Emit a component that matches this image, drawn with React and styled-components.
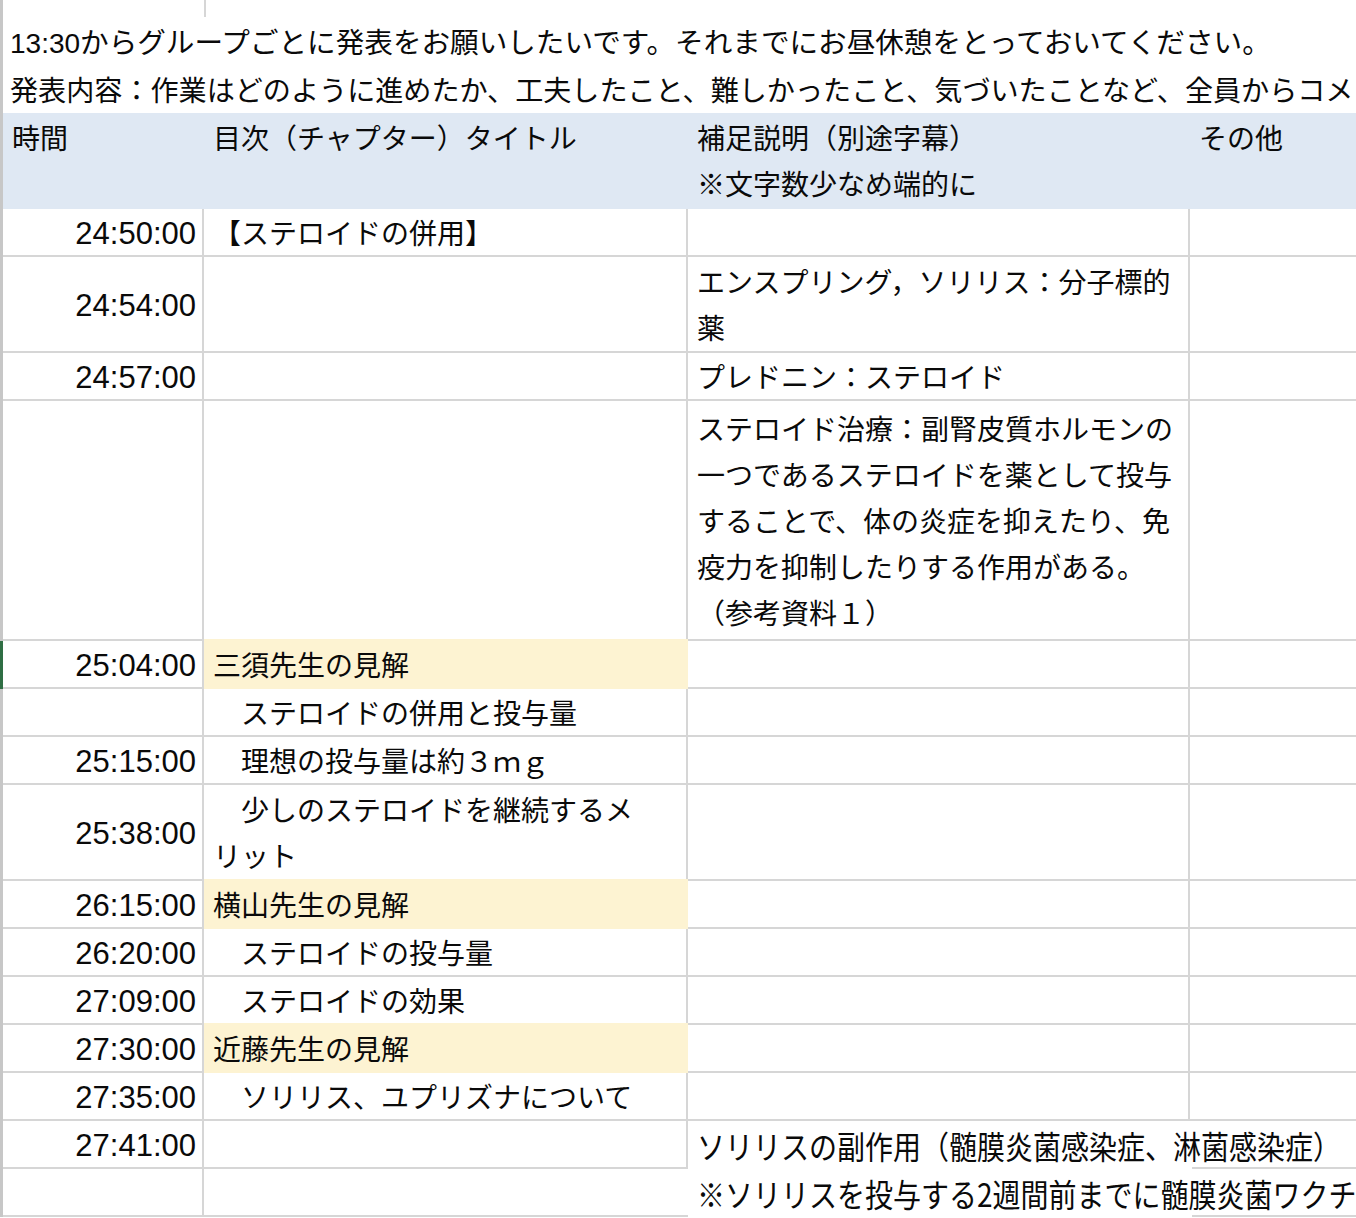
import React from "react";
import styled, { createGlobalStyle, css } from "styled-components";

const Global = createGlobalStyle`
  html, body { margin: 0; padding: 0; background: #fff; }
  body {
    width: 1356px;
    height: 1218px;
    overflow: hidden;
    font-family: "Noto Sans CJK JP", "Noto Sans", sans-serif;
    color: #0a0a0a;
  }
`;

const GRID = "#d6d6d6";
const EDGE = "#c7c7c7";

const Sheet = styled.div`
  width: 1356px;
  display: flex;
  flex-direction: column;
  font-size: 28px;
  line-break: strict;
`;

const Row = styled.div`
  display: grid;
  grid-template-columns: 201px 484px 502px 169px;
  height: ${(p) => p.$h}px;
  border-left: 3px solid ${(p) => (p.$active ? "#2f6e44" : EDGE)};
  box-sizing: border-box;
  background: ${(p) => p.$bg || "transparent"};
`;

const WideRow = styled.div`
  height: 48px;
  border-left: 3px solid ${EDGE};
  padding-left: 7px;
  font-size: ${(p) => p.$size || 28}px;
  line-height: 48px;
  white-space: nowrap;
  overflow: hidden;
`;

const Digits = styled.span`
  font-family: "Liberation Sans Narrow", "Liberation Sans", sans-serif;
  font-size: 28px;
`;

const TopStub = styled.div`
  height: 17px;
  width: 203px;
  border-right: 2px solid ${GRID};
  box-sizing: border-box;
`;

const HeadCell = styled.div`
  padding: 1px 9px 0 9px;
  line-height: 46px;
  white-space: pre-wrap;
`;

const Cell = styled.div`
  box-sizing: border-box;
  border-right: ${(p) => (p.$noRight ? "none" : `2px solid ${GRID}`)};
  border-bottom: ${(p) => (p.$noBottom ? "none" : `2px solid ${GRID}`)};
  padding: 0 8px 0 9px;
  line-height: 46px;
  display: flex;
  align-items: center;
  white-space: pre-wrap;
  overflow: hidden;
  ${(p) =>
    p.$hl &&
    css`
      background: #fdf3d2;
      border-color: #fdf3d2;
      box-shadow: 0 -2px 0 #fdf3d2;
    `}
`;

const TimeCell = styled(Cell)`
  justify-content: flex-end;
  padding: 3px 6px 0 4px;
  font-family: "Liberation Sans", "Noto Sans CJK JP", sans-serif;
  font-size: 31px;
`;

const Block = styled.div`
  width: 100%;
`;

const SpillCell = styled.div`
  grid-column: 3 / span 2;
  box-sizing: border-box;
  padding-left: 9px;
  height: 48px;
  overflow: hidden;
  white-space: nowrap;
  display: flex;
  align-items: center;
  background: linear-gradient(${GRID}, ${GRID}) no-repeat right bottom / 167px 2px;
`;

const Condensed = styled.span`
  display: inline-block;
  font-size: 32px;
  line-height: 46px;
  transform: scaleX(0.875);
  transform-origin: left center;
`;

const rows = [
  { t: "24:50:00", b: "【ステロイドの併用】", h: 48 },
  { t: "24:54:00", c: "エンスプリング，ソリリス：分子標的薬", h: 96 },
  { t: "24:57:00", c: "プレドニン：ステロイド", h: 48 },
  {
    t: "",
    c: "ステロイド治療：副腎皮質ホルモンの一つであるステロイドを薬として投与することで、体の炎症を抑えたり、免疫力を抑制したりする作用がある。\n（参考資料１）",
    h: 240,
  },
  { t: "25:04:00", b: "三須先生の見解", hl: true, active: true, h: 48 },
  { t: "", b: "　ステロイドの併用と投与量", h: 48 },
  { t: "25:15:00", b: "　理想の投与量は約３ｍｇ", h: 48 },
  { t: "25:38:00", b: "　少しのステロイドを継続するメ\nリット", h: 96 },
  { t: "26:15:00", b: "横山先生の見解", hl: true, h: 48 },
  { t: "26:20:00", b: "　ステロイドの投与量", h: 48 },
  { t: "27:09:00", b: "　ステロイドの効果", h: 48 },
  { t: "27:30:00", b: "近藤先生の見解", hl: true, h: 48 },
  { t: "27:35:00", b: "　ソリリス、ユプリズナについて", h: 48 },
  { t: "27:41:00", spill: "ソリリスの副作用（髄膜炎菌感染症、淋菌感染症）", h: 48 },
  {
    t: "",
    spill: "※ソリリスを投与する2週間前までに髄膜炎菌ワクチンの接種が必要です",
    h: 48,
    last: true,
  },
];

export default function App() {
  return (
    <>
      <Global />
      <Sheet lang="ja">
        <Row $h={17}>
          <TopStub />
        </Row>
        <WideRow $size={28.6}>
          <Digits>13:30</Digits>からグループごとに発表をお願いしたいです。それまでにお昼休憩をとっておいてください。
        </WideRow>
        <WideRow $size={28.1}>
          発表内容：作業はどのように進めたか、工夫したこと、難しかったこと、気づいたことなど、全員からコメントをお願いします。
        </WideRow>
        <Row $h={96} $bg="#dfe8f3">
          <HeadCell>時間</HeadCell>
          <HeadCell>目次（チャプター）タイトル</HeadCell>
          <HeadCell>{"補足説明（別途字幕）\n※文字数少なめ端的に"}</HeadCell>
          <HeadCell>その他</HeadCell>
        </Row>
        {rows.map((r, i) => (
          <Row key={i} $h={r.h} $active={r.active}>
            <TimeCell>{r.t}</TimeCell>
            <Cell $hl={r.hl} $noRight={r.last}>
              <Block>{r.b}</Block>
            </Cell>
            {r.spill ? (
              <SpillCell>
                <Condensed>{r.spill}</Condensed>
              </SpillCell>
            ) : (
              <>
                <Cell>
                  <Block>{r.c}</Block>
                </Cell>
                <Cell $noRight />
              </>
            )}
          </Row>
        ))}
      </Sheet>
    </>
  );
}
